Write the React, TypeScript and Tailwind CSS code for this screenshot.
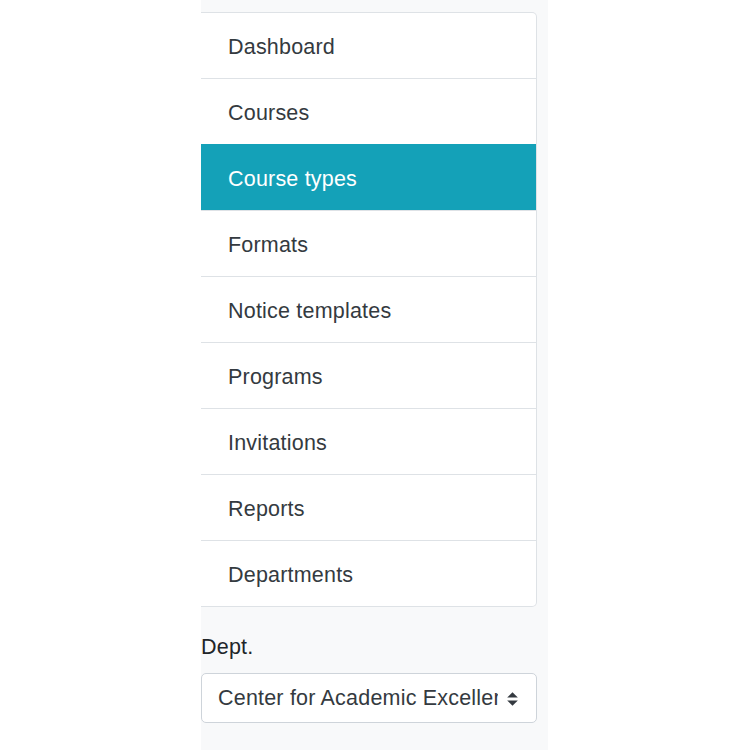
import React from "react";

const items = [
  "Dashboard",
  "Courses",
  "Course types",
  "Formats",
  "Notice templates",
  "Programs",
  "Invitations",
  "Reports",
  "Departments",
];

export default function App() {
  return (
    <div
      className="flex min-h-[750px] w-[750px] bg-white"
      style={{ fontFamily: '"Liberation Sans", Arial, sans-serif' }}
    >
      <div className="w-[201px] shrink-0" />
      <div className="w-[347px] shrink-0 bg-[#f8f9fa] pt-[12px] pr-[11px]">
        <div className="flex flex-col rounded-r-[5px] border border-l-0 border-[#dee2e6] bg-white">
          {items.map((label, i) => {
            const active = label === "Course types";
            return (
              <div
                key={label}
                className={
                  active
                    ? "flex h-[66px] items-center border-t border-[#14a1b8] bg-[#14a1b8] pl-[27px] pt-[3px] text-[21.5px] tracking-[0.2px] text-white"
                    : i === 0
                    ? "flex h-[65px] items-center pl-[27px] pt-[3px] text-[21.5px] tracking-[0.2px] text-[#343a40]"
                    : "flex h-[66px] items-center border-t border-[#dee2e6] pl-[27px] pt-[3px] text-[21.5px] tracking-[0.2px] text-[#343a40]"
                }
              >
                {label}
              </div>
            );
          })}
        </div>
        <div className="mt-[25px] text-[21.5px] leading-[30px] tracking-[0.2px] text-[#212529]">Dept.</div>
        <div className="mt-[11px] flex h-[50px] items-center rounded-[5px] border border-[#ced4da] bg-white pl-[16px] pr-[18px] pt-[1px]">
          <span className="flex-1 overflow-hidden whitespace-nowrap text-[21.5px] tracking-[0.2px] text-[#343a40]">
            Center for Academic Excellence
          </span>
          <svg width="11" height="14" viewBox="0 0 11 14" className="ml-[9px] shrink-0">
            <path d="M5.5 0.3 L10.8 5.6 H0.2 Z" fill="#343a40" />
            <path d="M0.2 8.4 H10.8 L5.5 13.7 Z" fill="#343a40" />
          </svg>
        </div>
      </div>
      <div className="flex-1 bg-white" />
    </div>
  );
}
